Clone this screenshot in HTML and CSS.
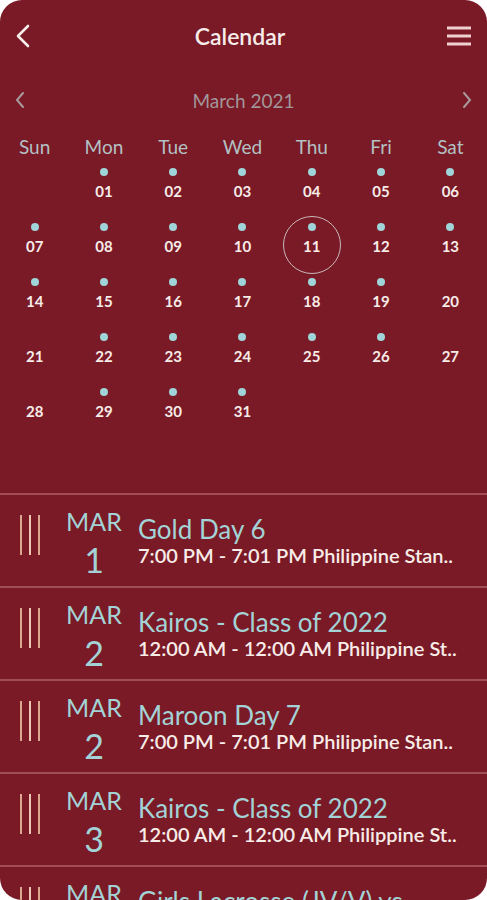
FILE: index.html
```html
<!DOCTYPE HTML>
<html lang="en">
<head>
  <meta charset="UTF-8">
  <title>Calendar</title>
  <link rel="stylesheet" href="styles.css">
</head>
<body>
  <div class="app">
    <!-- top bar -->
    <div class="topbar">
      <svg class="back" width="20" height="26" viewBox="0 0 20 26"><path d="M14 3 L4 13 L14 23" fill="none" stroke="#f6ecea" stroke-width="2.6" stroke-linecap="round" stroke-linejoin="round"/></svg>
      <div class="title">Calendar</div>
      <svg class="menu" width="26" height="22" viewBox="0 0 26 22"><path d="M1 3 H25 M1 11 H25 M1 19 H25" stroke="#efcfd0" stroke-width="3"/></svg>
    </div>

    <!-- month switcher -->
    <div class="month-nav">
      <svg width="12" height="18" viewBox="0 0 12 18"><path d="M9 2 L3 9 L9 16" fill="none" stroke="#a89a9c" stroke-width="2" stroke-linecap="round"/></svg>
      <div class="month">March 2021</div>
      <svg width="12" height="18" viewBox="0 0 12 18"><path d="M3 2 L9 9 L3 16" fill="none" stroke="#a89a9c" stroke-width="2" stroke-linecap="round"/></svg>
    </div>

    <div class="weekdays">
      <span>Sun</span><span>Mon</span><span>Tue</span><span>Wed</span><span>Thu</span><span>Fri</span><span>Sat</span>
    </div>

    <div class="days">
      <div class="day"></div>
      <div class="day has-event"><i></i><b>01</b></div>
      <div class="day has-event"><i></i><b>02</b></div>
      <div class="day has-event"><i></i><b>03</b></div>
      <div class="day has-event"><i></i><b>04</b></div>
      <div class="day has-event"><i></i><b>05</b></div>
      <div class="day has-event"><i></i><b>06</b></div>

      <div class="day has-event"><i></i><b>07</b></div>
      <div class="day has-event"><i></i><b>08</b></div>
      <div class="day has-event"><i></i><b>09</b></div>
      <div class="day has-event"><i></i><b>10</b></div>
      <div class="day has-event today"><i></i><b>11</b></div>
      <div class="day has-event"><i></i><b>12</b></div>
      <div class="day has-event"><i></i><b>13</b></div>

      <div class="day has-event"><i></i><b>14</b></div>
      <div class="day has-event"><i></i><b>15</b></div>
      <div class="day has-event"><i></i><b>16</b></div>
      <div class="day has-event"><i></i><b>17</b></div>
      <div class="day has-event"><i></i><b>18</b></div>
      <div class="day has-event"><i></i><b>19</b></div>
      <div class="day"><i></i><b>20</b></div>

      <div class="day"><i></i><b>21</b></div>
      <div class="day has-event"><i></i><b>22</b></div>
      <div class="day has-event"><i></i><b>23</b></div>
      <div class="day has-event"><i></i><b>24</b></div>
      <div class="day has-event"><i></i><b>25</b></div>
      <div class="day has-event"><i></i><b>26</b></div>
      <div class="day"><i></i><b>27</b></div>

      <div class="day"><i></i><b>28</b></div>
      <div class="day has-event"><i></i><b>29</b></div>
      <div class="day has-event"><i></i><b>30</b></div>
      <div class="day has-event"><i></i><b>31</b></div>
    </div>

    <!-- event list -->
    <div class="events">
      <div class="event">
        <div class="grip"><span></span><span></span><span></span></div>
        <div class="date"><div class="mon">MAR</div><div class="num">1</div></div>
        <div class="info">
          <div class="name">Gold Day 6</div>
          <div class="time">7:00 PM - 7:01 PM Philippine Stan..</div>
        </div>
      </div>
      <div class="event">
        <div class="grip"><span></span><span></span><span></span></div>
        <div class="date"><div class="mon">MAR</div><div class="num">2</div></div>
        <div class="info">
          <div class="name">Kairos - Class of 2022</div>
          <div class="time">12:00 AM - 12:00 AM Philippine St..</div>
        </div>
      </div>
      <div class="event">
        <div class="grip"><span></span><span></span><span></span></div>
        <div class="date"><div class="mon">MAR</div><div class="num">2</div></div>
        <div class="info">
          <div class="name">Maroon Day 7</div>
          <div class="time">7:00 PM - 7:01 PM Philippine Stan..</div>
        </div>
      </div>
      <div class="event">
        <div class="grip"><span></span><span></span><span></span></div>
        <div class="date"><div class="mon">MAR</div><div class="num">3</div></div>
        <div class="info">
          <div class="name">Kairos - Class of 2022</div>
          <div class="time">12:00 AM - 12:00 AM Philippine St..</div>
        </div>
      </div>
      <div class="event">
        <div class="grip"><span></span><span></span><span></span></div>
        <div class="date"><div class="mon">MAR</div><div class="num">3</div></div>
        <div class="info">
          <div class="name">Girls Lacrosse (JV/V) vs</div>
        </div>
      </div>
    </div>
  </div>
</body>
</html>
```

FILE: styles.css
```css
html, body {
    margin: 0;
    background-color: #fff;
}
body {
    font-family: "Lato", "Open Sans", sans-serif;
}

.app {
    background-color: #7a1a26;
    border-radius: 22px;
    height: 900px;
    overflow: hidden;
}

/* top bar */
.topbar {
    align-items: center;
    display: flex;
    height: 72px;
    justify-content: space-between;
    padding: 0 15px 0 14px;
}
.topbar .title {
    color: #f6ecea;
    font-size: 23px;
    font-weight: 600;
}

/* month switcher */
.month-nav {
    align-items: center;
    display: flex;
    height: 56px;
    justify-content: space-between;
    padding: 0 14px;
}
.month-nav .month {
    color: #a2969a;
    font-size: 19px;
}

/* calendar grid */
.weekdays,
.days {
    display: grid;
    grid-template-columns: repeat(7, 1fr);
    padding-right: 2px;
}
.weekdays span {
    color: #b3c1c4;
    font-size: 19px;
    line-height: 38px;
    text-align: center;
}
.day {
    align-items: center;
    display: flex;
    flex-direction: column;
    height: 55px;
    position: relative;
}
.day i {
    border-radius: 50%;
    height: 8px;
    margin-top: 2px;
    width: 8px;
}
.day.has-event i {
    background-color: #9fd4d8;
}
.day b {
    color: #f7ece8;
    font-size: 15px;
    font-weight: 700;
    line-height: 24px;
    margin-top: 3px;
}
.day.today::after {
    border: solid 1.5px #c9b8ba;
    border-radius: 50%;
    content: "";
    height: 56px;
    left: 50%;
    margin-left: -29px;
    position: absolute;
    top: -5px;
    width: 56px;
}

/* events */
.events {
    margin-top: 52px;
}
.event {
    align-items: flex-start;
    border-top: solid 2px #a24e58;
    display: flex;
    height: 79px;
    padding-top: 12px;
}
.grip {
    display: flex;
    gap: 7px;
    height: 40px;
    margin: 8px 0 0 20px;
    width: 22px;
}
.grip span {
    background-color: #dba88f;
    width: 2px;
}
.grip span:nth-child(2) {
    background-color: #ecc7b4;
}
.date {
    color: #a3d3d6;
    margin-left: 20px;
    text-align: center;
    width: 64px;
}
.date .mon {
    font-size: 25px;
    line-height: 28px;
}
.date .num {
    font-size: 34px;
    line-height: 50px;
}
.info {
    flex: 1;
    margin: 7px 20px 0 12px;
    min-width: 0;
}
.info .name {
    color: #a3d3d6;
    font-size: 26px;
    line-height: 30px;
    white-space: nowrap;
}
.info .time {
    color: #f7ece8;
    font-size: 20px;
    font-weight: 600;
    line-height: 22px;
    white-space: nowrap;
}
```
